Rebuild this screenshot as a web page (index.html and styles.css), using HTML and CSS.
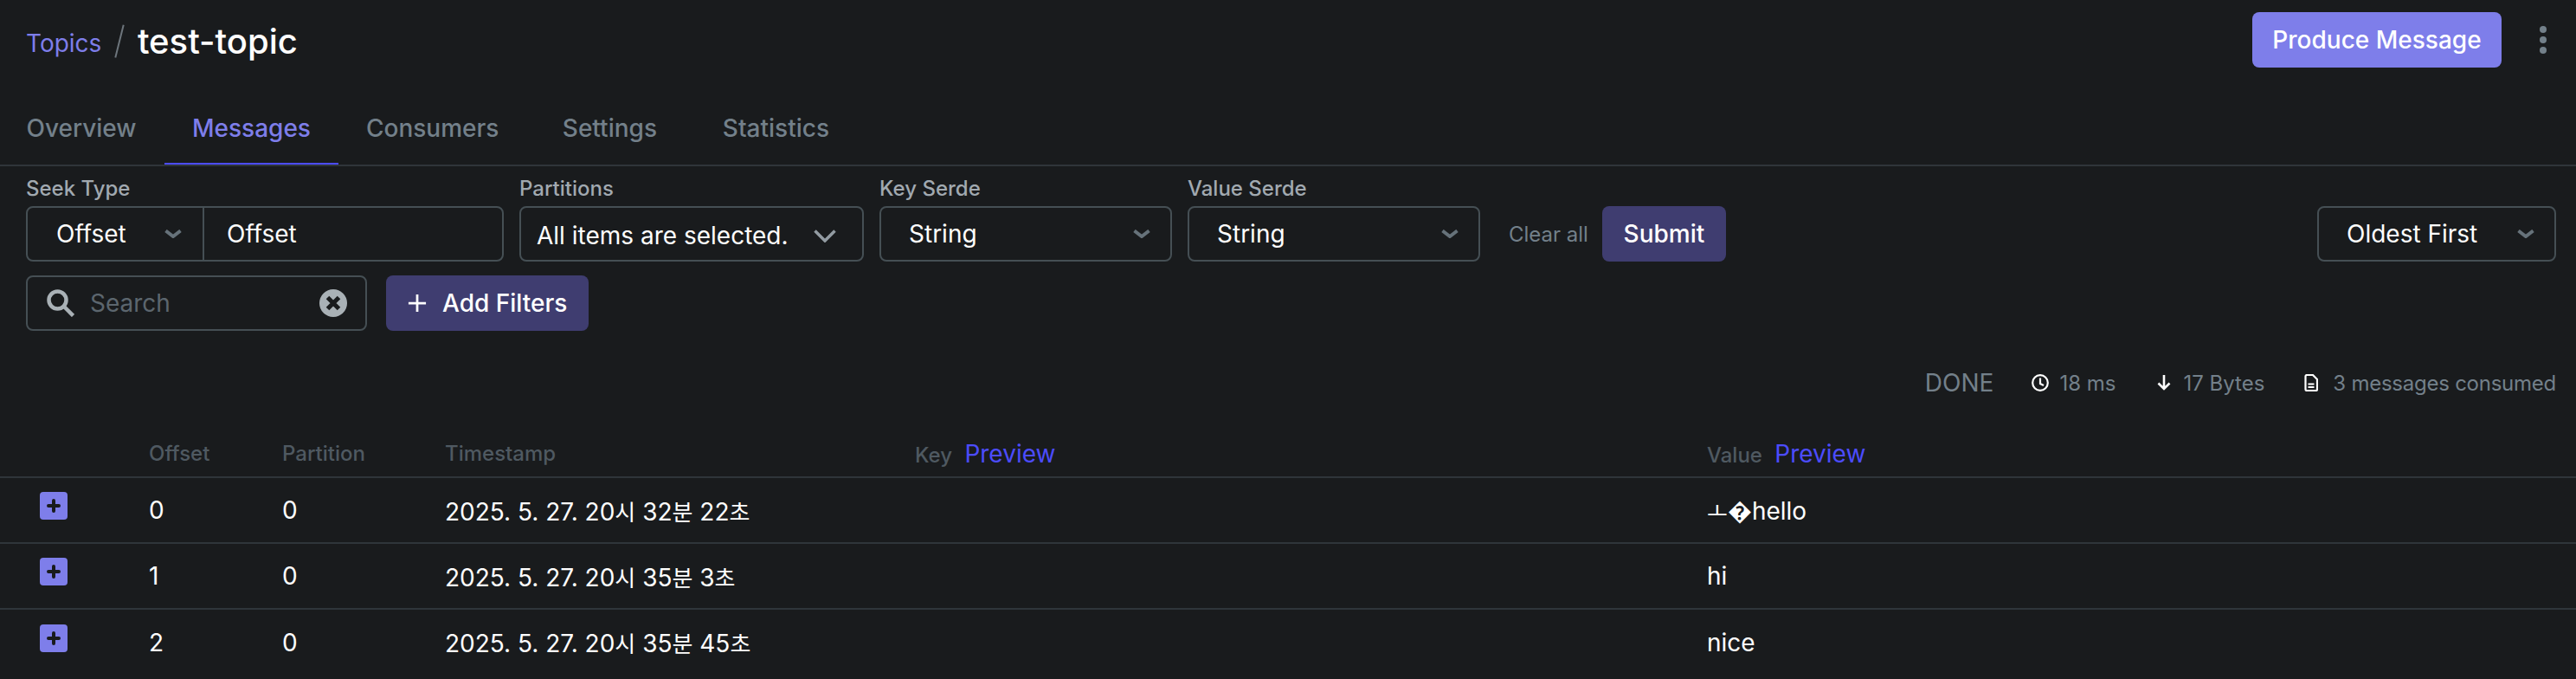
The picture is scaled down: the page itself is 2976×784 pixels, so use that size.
FILE: index.html
```html
<!DOCTYPE html>
<html>

<head>
    <meta charset="utf-8">
    <link rel="stylesheet" href="styles.css">
</head>

<body>
    <header class="top">
        <div class="crumbs">
            <a class="crumb-link">Topics</a>
            <span class="crumb-sep"></span>
            <h1>test-topic</h1>
        </div>
        <div class="top-actions">
            <button class="btn btn-primary">Produce Message</button>
            <span class="dots"><i></i><i></i><i></i></span>
        </div>
    </header>

    <nav class="tabs">
        <a class="tab">Overview</a>
        <a class="tab active">Messages</a>
        <a class="tab">Consumers</a>
        <a class="tab">Settings</a>
        <a class="tab">Statistics</a>
    </nav>

    <section class="filters">
        <div class="filter-row">
            <div class="field">
                <label>Seek Type</label>
                <div class="seek">
                    <div class="select seek-select">Offset
                        <svg class="chev" viewBox="0 0 20 10"><path d="M1.5 1.5L10 8l8.5-6.5" /></svg>
                    </div>
                    <div class="seek-input">Offset</div>
                </div>
            </div>
            <div class="field">
                <label>Partitions</label>
                <div class="select multi">All items are selected.
                    <svg class="chev-big" viewBox="0 0 26 15"><path d="M1.5 1.5L13 13 24.5 1.5" /></svg>
                </div>
            </div>
            <div class="field">
                <label>Key Serde</label>
                <div class="select serde">String
                    <svg class="chev" viewBox="0 0 20 10"><path d="M1.5 1.5L10 8l8.5-6.5" /></svg>
                </div>
            </div>
            <div class="field">
                <label>Value Serde</label>
                <div class="select serde">String
                    <svg class="chev" viewBox="0 0 20 10"><path d="M1.5 1.5L10 8l8.5-6.5" /></svg>
                </div>
            </div>
            <a class="clear">Clear all</a>
            <button class="btn btn-muted submit">Submit</button>
            <div class="select order">Oldest First
                <svg class="chev" viewBox="0 0 20 10"><path d="M1.5 1.5L10 8l8.5-6.5" /></svg>
            </div>
        </div>
        <div class="search-row">
            <div class="search">
                <svg class="search-icon" viewBox="0 0 32 32"><circle cx="12.5" cy="12.5" r="10" /><path d="M20 20l10.5 10.5" /></svg>
                <span class="placeholder">Search</span>
                <svg class="clear-icon" viewBox="0 0 32 32">
                    <circle class="disc" cx="16" cy="16" r="16" />
                    <path class="cross" d="M9.5 9.5l13 13M22.5 9.5l-13 13" />
                </svg>
            </div>
            <button class="btn btn-muted add-filters">
                <svg class="plus" viewBox="0 0 24 24"><path d="M12 1v22M1 12h22" /></svg>
                Add Filters
            </button>
        </div>
    </section>

    <div class="stats">
        <span class="done">DONE</span>
        <span class="stat stat-time">
            <svg viewBox="0 0 20 20" class="stat-icon"><circle cx="10" cy="10" r="8.8" /><path d="M10 4.5V11l4 2" /></svg>
            18 ms
        </span>
        <span class="stat stat-bytes">
            <svg viewBox="0 0 16 20" class="stat-icon arrow"><path d="M8 1v16M1.5 10.5L8 17l6.5-6.5" /></svg>
            17 Bytes
        </span>
        <span class="stat stat-count">
            <svg viewBox="0 0 16 20" class="stat-icon doc"><path d="M3 1h7l5 5v11.5a1.500 1.500 0 0 1-1.500 1.500h-10.500a1.500 1.500 0 0 1-1.500-1.500v-15a1.500 1.500 0 0 1 1.500-1.500zM4.500 11.500h7M4.500 15h7" /></svg>
            3 messages consumed
        </span>
    </div>

    <table class="messages">
        <colgroup>
            <col class="col-expand">
            <col class="col-offset">
            <col class="col-partition">
            <col class="col-time">
            <col class="col-key">
            <col>
        </colgroup>
        <thead>
            <tr>
                <th></th>
                <th>Offset</th>
                <th>Partition</th>
                <th>Timestamp</th>
                <th>Key <a class="preview">Preview</a></th>
                <th>Value <a class="preview">Preview</a></th>
            </tr>
        </thead>
        <tbody>
            <tr>
                <td><span class="expand"><svg viewBox="0 0 32 32"><path d="M16 10v12M10 16h12" /></svg></span></td>
                <td>0</td>
                <td>0</td>
                <td>2025. 5. 27. 20<span class="ko">시</span> 32<span class="ko">분</span> 22<span class="ko">초</span></td>
                <td></td>
                <td><span class="ko">ㅗ</span>�hello</td>
            </tr>
            <tr>
                <td><span class="expand"><svg viewBox="0 0 32 32"><path d="M16 10v12M10 16h12" /></svg></span></td>
                <td>1</td>
                <td>0</td>
                <td>2025. 5. 27. 20<span class="ko">시</span> 35<span class="ko">분</span> 3<span class="ko">초</span></td>
                <td></td>
                <td>hi</td>
            </tr>
            <tr>
                <td><span class="expand"><svg viewBox="0 0 32 32"><path d="M16 10v12M10 16h12" /></svg></span></td>
                <td>2</td>
                <td>0</td>
                <td>2025. 5. 27. 20<span class="ko">시</span> 35<span class="ko">분</span> 45<span class="ko">초</span></td>
                <td></td>
                <td>nice</td>
            </tr>
        </tbody>
    </table>
</body>

</html>
```

FILE: styles.css
```css
* {
    box-sizing: border-box;
}

html,
body {
    height: 100%;
    overflow: hidden;
}

body {
    margin: 0;
    background-color: #191b1d;
    color: #fff;
    font-family: Inter, "Noto Sans CJK KR", sans-serif;
    font-size: 28px;
}

/* header */
.top {
    display: flex;
    justify-content: space-between;
    align-items: flex-start;
    height: 118px;
    padding: 14px 34px 0 30px;
}

.crumbs {
    display: flex;
    align-items: center;
    height: 66px;
}

.crumb-link {
    color: #7e7eea;
    font-size: 28px;
    margin-top: 6px;
}

.crumb-sep {
    width: 1.5px;
    height: 39px;
    margin: 0 20px 0 20px;
    background-color: #6d757c;
    transform: rotate(14deg);
}

h1 {
    margin: 0;
    font-size: 40px;
    font-weight: 500;
}

.top-actions {
    display: flex;
    align-items: center;
    gap: 44px;
}

.btn {
    height: 64px;
    border: 0;
    border-radius: 8px;
    color: #fff;
    font-family: inherit;
    font-size: 28px;
    font-weight: 500;
    cursor: pointer;
}

.btn-primary {
    width: 288px;
    background-color: #7e7eea;
}

.btn-muted {
    background-color: #3f3d70;
}

.dots {
    display: flex;
    flex-direction: column;
    gap: 4px;
    width: 8px;
}

.dots i {
    width: 8px;
    height: 8px;
    border-radius: 50%;
    background-color: #73808a;
}

/* tabs */
.tabs {
    display: flex;
    height: 74px;
    border-bottom: 2px solid #2f353a;
}

.tab {
    position: relative;
    display: flex;
    justify-content: center;
    align-items: center;
    min-width: 192px;
    height: 72px;
    padding: 0 32px 12px;
    color: #73808a;
    font-weight: 500;
}

.tab:first-child {
    margin-left: -2px;
}

.tab.active {
    color: #7e7eea;
}

.tab.active::after {
    content: "";
    position: absolute;
    left: 0;
    right: 0;
    bottom: 0;
    height: 2px;
    background-color: #4c4cff;
}

/* filters */
.filters {
    padding: 13px 23px 0 30px;
}

.filter-row {
    display: flex;
    align-items: flex-end;
}

.field {
    margin-right: 18px;
}

.field label {
    display: block;
    height: 33px;
    line-height: 26px;
    color: #a1a9b0;
    font-size: 24px;
    font-weight: 500;
}

.select,
.seek,
.search {
    height: 64px;
    border: 2px solid #454f54;
    border-radius: 8px;
}

.select {
    display: flex;
    justify-content: space-between;
    align-items: center;
    padding: 0 23px 0 32px;
}

.chev,
.chev-big {
    fill: none;
}

.chev {
    width: 20px;
    height: 10px;
    stroke: #66727a;
    stroke-width: 4;
}

.chev-big {
    width: 26px;
    height: 15px;
    stroke: #929ba2;
    stroke-width: 3.5;
}

.seek {
    display: flex;
    width: 552px;
}

.seek-select {
    width: 204px;
    height: 60px;
    padding: 0 24px 0 33px;
    border: 0;
    border-right: 2px solid #454f54;
    border-radius: 0;
}

.seek-input {
    display: flex;
    align-items: center;
    padding-left: 26px;
}

.multi {
    width: 398px;
    padding: 4px 30px 0 18px;
}

.serde {
    width: 338px;
}

.clear {
    align-self: center;
    margin: 33px 16px 0 15px;
    color: #73808a;
    font-size: 24px;
}

.submit {
    width: 143px;
}

.order {
    width: 276px;
    margin-left: auto;
}

.search-row {
    display: flex;
    gap: 22px;
    margin-top: 16px;
}

.search {
    display: flex;
    align-items: center;
    width: 394px;
    padding: 0 21px 0 22px;
}

.search-icon {
    width: 32px;
    height: 32px;
    fill: none;
    stroke: #a9b1b6;
    stroke-width: 4.5;
}

.placeholder {
    flex: 1;
    margin-left: 18px;
    color: #5c666e;
}

.clear-icon {
    width: 32px;
    height: 32px;
}

.disc {
    fill: #a9b1b6;
}

.cross {
    fill: none;
    stroke: #191b1d;
    stroke-width: 5;
}

.add-filters {
    display: flex;
    align-items: center;
    gap: 18px;
    width: 234px;
    padding: 0 0 0 25px;
}

.plus {
    width: 22px;
    height: 22px;
    fill: none;
    stroke: #fff;
    stroke-width: 3;
}

/* stats */
.stats {
    display: flex;
    justify-content: flex-end;
    align-items: center;
    height: 40px;
    margin-top: 40px;
    padding-right: 23px;
    color: #73808a;
    font-size: 24px;
}

.done {
    font-size: 28px;
}

.stat {
    display: flex;
    align-items: center;
    gap: 12px;
    margin-left: 46px;
}

.stat-time {
    margin-left: 44px;
}

.stat-bytes {
    gap: 14px;
    margin-left: 48px;
}

.stat-count {
    gap: 17px;
    letter-spacing: -0.25px;
}

.stat-icon {
    width: 20px;
    height: 20px;
    fill: none;
    stroke: #fff;
    stroke-width: 2.2;
}

.stat-icon.arrow {
    width: 16px;
    stroke-width: 2.6;
}

.stat-icon.doc {
    width: 16px;
}

/* table */
.messages {
    width: 100%;
    margin-top: 39px;
    border-collapse: collapse;
    table-layout: fixed;
}

.col-expand {
    width: 172px;
}

.col-offset {
    width: 154px;
}

.col-partition {
    width: 188px;
}

.col-time {
    width: 543px;
}

.col-key {
    width: 915px;
}

th {
    height: 50px;
    padding: 0 0 4px;
    border-bottom: 2px solid #2f353a;
    color: #4f5961;
    font-size: 24px;
    font-weight: 500;
    text-align: left;
}

td {
    height: 76px;
    padding: 0;
    border-bottom: 2px solid #2f353a;
}

tbody tr:last-child td {
    border-bottom: 0;
}

.preview {
    margin-left: 8px;
    color: #4c4cff;
    font-size: 28px;
    font-weight: 400;
}

.ko {
    font-size: 26px;
}

.expand {
    display: block;
    width: 32px;
    height: 32px;
    margin: -10px 0 0 46px;
    border-radius: 4px;
    background-color: #7e7eea;
}

.expand svg {
    display: block;
    width: 32px;
    height: 32px;
    fill: none;
    stroke: #191b1d;
    stroke-width: 4;
    stroke-linecap: round;
}
```
